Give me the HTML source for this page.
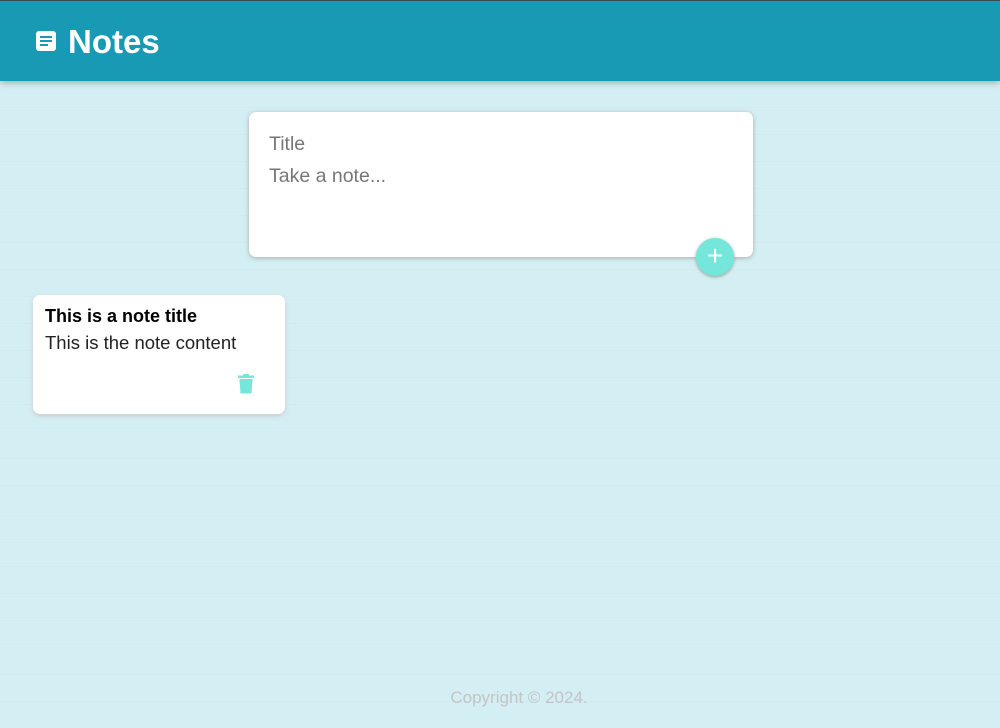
<!DOCTYPE html>
<html><head><meta charset="utf-8"><style>
*{box-sizing:border-box;margin:0;padding:0}
html,body{width:1000px;height:728px;overflow:hidden}
body{font-family:"Liberation Sans",sans-serif;background:#d3eff3;
background-image:repeating-linear-gradient(180deg,transparent 0,transparent 26px,rgba(195,212,220,.18) 26px,rgba(195,212,220,.18) 27px);position:relative}
header{position:absolute;left:0;top:0;width:1000px;height:81px;background:#189ab4;border-top:1px solid #3a4a50;box-shadow:0 2px 6px rgba(0,0,0,.25);display:flex;align-items:center;padding-left:36px}
header h1{font-family:"Comic Sans MS","Liberation Sans",cursive;font-weight:bold;color:#fff;font-size:33px;margin-left:12px;margin-top:2px}
.form{position:absolute;left:249px;top:112px;width:504px;height:145px;background:#fff;border-radius:7px;box-shadow:0 1px 5px #aaa;padding:21px 20px}
.form div{font-size:19.5px;color:#777;height:32px}
.add{position:absolute;left:696px;top:238px;width:38px;height:38px;border-radius:50%;background:#75e6da;box-shadow:0 1px 3px #999;color:#fff;font-size:28px;line-height:36px;text-align:center;font-weight:300}
.note{position:absolute;left:33px;top:295px;width:252px;height:119px;background:#fff;border-radius:7px;box-shadow:0 2px 5px #ccc;padding:10px 12px}
.note h2{font-size:18px;margin-bottom:5px;margin-top:1px}
.note p{font-size:18.5px;color:#222}
.trash{position:absolute;left:238px;top:374px}
footer{position:absolute;left:0;top:688px;width:1000px;text-align:center;color:#c4c4c4;font-size:17px;padding-left:38px}
</style></head><body>
<header><svg width="20" height="20" viewBox="0 0 20 20"><rect x="0" y="0" width="20" height="20" rx="3" fill="#fff"/><rect x="4" y="5" width="12" height="2" fill="#189ab4"/><rect x="4" y="9" width="12" height="2" fill="#189ab4"/><rect x="4" y="13" width="8" height="2" fill="#189ab4"/></svg><h1>Notes</h1></header>
<div class="form"><div>Title</div><div>Take a note...</div></div>
<div class="add">+</div>
<div class="note"><h2>This is a note title</h2><p>This is the note content</p></div>
<svg class="trash" width="16" height="20" viewBox="0 0 16 20"><rect x="0" y="1.5" width="16" height="2.5" fill="#75e6da"/><rect x="5" y="0" width="6" height="2" fill="#75e6da"/><path d="M1.5 5h13l-1 14.5h-11z" fill="#75e6da"/></svg>
<footer>Copyright © 2024.</footer>
</body></html>
